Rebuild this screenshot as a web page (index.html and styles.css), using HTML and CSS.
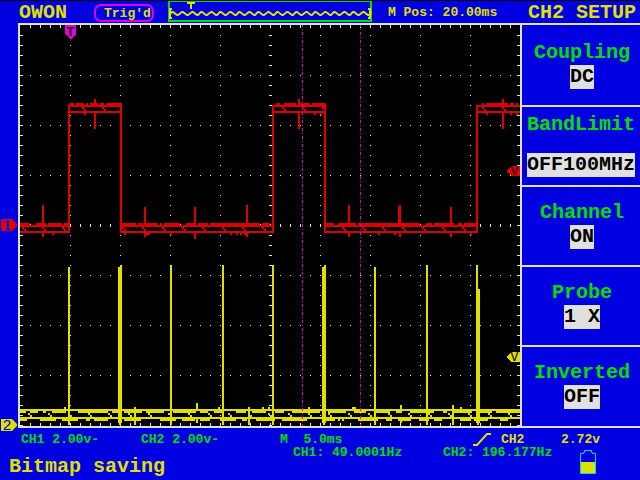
FILE: index.html
```
<!DOCTYPE html>
<html lang="en">
<head>
<meta charset="utf-8">
<title>OWON oscilloscope</title>
<link rel="stylesheet" href="styles.css">
</head>
<body>
<div class="scope">
  <header class="topbar">
    <span class="brand">OWON</span>
    <span class="trigger-state">Trig'd</span>
    <svg class="memory" viewBox="0 0 204 21" preserveAspectRatio="none" aria-hidden="true">
      <path class="green" d="M0 0H204V21H0ZM2 1V19H202V1Z" fill-rule="evenodd"/>
      <path class="yellow" d="M19 1h8v2h-3v5h-2V3h-3zM1 7h3v2H3v7h1v2H1zM200 7h3v11h-3v-2h1V9h-1z"/>
      <path class="memory-wave" d="M2 13l2-2h1l4 3h1l4-3h1l4 3h1l4-3h1l4 3h1l3-3h1l4 3h1l4-3h1l4 3h1l3-3h1l4 3h1l4-3h1l4 3h1l3-3h1l4 3h1l4-3h1l4 3h1l3-3h1l4 3h1l4-3h1l4 3h1l3-3h1l4 3h1l4-3h1l4 3h1l3-3h1l4 3h1l4-3h1l4 3h1l3-3h1l4 3h1l4-3h1l4 3h1l3-3h1l4 3h1l4-3h1l4 3h1l3-3h1l4 3h1l4-3h1l4 3h1l3-3h1l4 3h1l3-3h1l3 3h1l3-3h1l3 3"/>
    </svg>
    <span class="position">M Pos: 20.00ms</span>
    <h1 class="menu-title">CH2 SETUP</h1>
  </header>

  <div class="gutter">
    <svg class="marker marker-ch1" viewBox="0 0 16 12"><path class="red" d="M0 0H11L16 5V7L11 12H0Z"/><text class="marker-one" x="6" y="11">1</text></svg>
    <svg class="marker marker-ch2" viewBox="0 0 16 12"><path class="yellow" d="M0 0H11L16 5V7L11 12H0Z"/><text class="marker-two" x="6" y="11">2</text></svg>
  </div>

  <main class="plot">
    <svg class="graph" viewBox="20 25 500 401" preserveAspectRatio="none" role="img" aria-label="Channel 1 and channel 2 waveforms">
      <g class="grid">
        <path class="dots" d="M70.5 35V426M120.5 35V426M170.5 35V426M220.5 35V426M320.5 35V426M370.5 35V426M420.5 35V426M470.5 35V426M30 75.5H520M30 125.5H520M30 175.5H520M30 275.5H520M30 325.5H520M30 375.5H520"/>
        <path class="dots ticks" d="M30 26.5H520M30 225.5H520M30 424.5H520M21.5 35V426M270.5 35V426M518.5 35V426"/>
      </g>

      <g class="yellow">
        <path d="M20 409H520V411H20ZM20 417H520V419H20Z"/>
        <path d="M20 411h6v2h-6zM30 411h8v2h-8zM43 411h3v2h-3zM52 411h14v2h-14zM78 411h30v2h-30zM112 411h6v2h-6zM124 411h18v2h-18zM146 411h18v2h-18zM173 411h23v2h-23zM200 411h8v2h-8zM214 411h10v2h-10zM236 411h10v2h-10zM252 411h14v2h-14zM275 411h9v2h-9zM292 411h28v2h-28zM328 411h18v2h-18zM354 411h12v2h-12zM374 411h16v2h-16zM396 411h6v2h-6zM410 411h24v2h-24zM443 411h4v2h-4zM452 411h20v2h-20zM480 411h12v2h-12zM496 411h24v2h-24z"/>
        <path d="M20 419h7v2h-7zM40 419h16v2h-16zM62 419h16v2h-16zM86 419h4v2h-4zM94 419h14v2h-14zM124 419h17v2h-17zM160 419h16v2h-16zM182 419h13v2h-13zM200 419h10v2h-10zM220 419h16v2h-16zM242 419h5v2h-5zM256 419h19v2h-19zM282 419h25v2h-25zM326 419h9v2h-9zM338 419h2v2h-2zM342 419h2v2h-2zM358 419h20v2h-20zM386 419h6v2h-6zM398 419h13v2h-13zM419 419h10v2h-10zM434 419h8v2h-8zM460 419h11v2h-11zM474 419h14v2h-14zM500 419h8v2h-8z"/>
        <path d="M68 267h2v158h-2zM118 267h2v-2h2v158h-1v2h-2v-2h-1zM170 265h2v160h-2zM222 265h2v160h-2zM272 265h2v160h-2zM322 267h2v-2h2v158h-1v2h-2v-2h-1zM374 267h2v158h-2zM426 265h2v160h-2zM476 265h2v24h2v134h-1v2h-2v-2h-1z"/>
        <path d="M134 407h2v18h-2zM196 403h2v6h-2zM196 419h2v4h-2zM248 407h2v18h-2zM64 407h2v2h-2zM218 407h2v2h-2zM262 407h2v2h-2zM268 407h2v2h-2zM308 407h2v2h-2zM352 407h4v2h-4zM400 405h2v4h-2zM400 419h2v4h-2zM452 405h2v20h-2zM460 407h2v2h-2z"/>
      </g>
      <path class="steps steps-ch2" d="M28 414H520M30 416H520"/>

      <g class="red">
        <path d="M20 225H68V105H122V225H272V105H326V225H476V105H520V107H478V233H324V107H274V233H120V107H70V233H20V231H68V227H20ZM122 227V231H272V227ZM326 227V231H476V227ZM70 111H120V113H70ZM274 111H324V113H274ZM478 111H520V113H478Z" fill-rule="evenodd"/>
        <path d="M20 223h10v2h-10zM36 223h10v2h-10zM48 223h14v2h-14zM64 223h5v2h-5zM121 223h15v2h-15zM138 223h5v2h-5zM144 223h14v2h-14zM160 223h2v2h-2zM164 223h16v2h-16zM186 223h10v2h-10zM198 223h10v2h-10zM210 223h50v2h-50zM262 223h8v2h-8zM324 223h10v2h-10zM338 223h18v2h-18zM358 223h62v2h-62zM426 223h6v2h-6zM434 223h20v2h-20zM458 223h4v2h-4zM464 223h12v2h-12z"/>
        <path d="M69 103h5v2h-5zM76 103h8v2h-8zM86 103h2v2h-2zM90 103h8v2h-8zM100 103h4v2h-4zM106 103h16v2h-16zM276 103h4v2h-4zM284 103h12v2h-12zM298 103h12v2h-12zM312 103h14v2h-14zM482 103h2v2h-2zM486 103h22v2h-22zM510 103h4v2h-4zM516 103h2v2h-2z"/>
        <path d="M94 99h2v5h-2zM94 112h2v17h-2zM298 99h2v5h-2zM298 112h2v17h-2zM502 99h2v5h-2zM502 112h2v17h-2zM42 205h2v19h-2zM42 232h2v5h-2zM144 207h2v17h-2zM144 232h2v5h-2zM194 207h2v17h-2zM194 232h2v7h-2zM246 205h2v19h-2zM246 232h2v5h-2zM348 205h2v19h-2zM348 232h2v5h-2zM398 207h1v-2h2v19h-3zM399 232h2v5h-2zM450 207h2v17h-2zM450 232h2v5h-2z"/>
        <path d="M84 113h2v2h-2zM314 113h2v2h-2zM320 113h2v2h-2zM486 113h2v2h-2zM510 113h2v2h-2zM516 113h2v2h-2zM52 233h2v2h-2zM124 233h2v2h-2zM146 233h4v2h-4zM170 233h2v2h-2zM230 233h2v2h-2zM236 233h2v2h-2zM240 233h2v2h-2zM244 233h2v2h-2zM378 233h2v2h-2zM394 233h2v2h-2zM470 233h2v2h-2z"/>
      </g>
      <path class="steps steps-ch1" d="M22 228H68M24 230H68M122 228H272M124 230H272M342 228H476M344 230H476M82 108H120M84 110H120M282 108H324M284 110H324M482 108H520M484 110H520"/>

      <path class="cursors" d="M302.5 24V426M360.5 24V426"/>
      <path class="magenta" d="M65 25H76V34L71 39H70L65 34Z"/>
      <text class="marker-t" x="70.5" y="36">T</text>
      <path class="red" d="M520 166H511L507 170V172L511 176H520Z"/>
      <path class="yellow" d="M520 352H511L507 356V358L511 362H520Z"/>
      <text class="marker-v" x="514.5" y="175">V</text>
      <text class="marker-v" x="514.5" y="361">V</text>
    </svg>
  </main>

  <nav class="menu" aria-label="CH2 setup">
    <button class="item item-first" type="button"><span class="label">Coupling</span><span class="value">DC</span></button>
    <button class="item item-spread" type="button"><span class="label">BandLimit</span><span class="value">OFF100MHz</span></button>
    <button class="item" type="button"><span class="label">Channel</span><span class="value">ON</span></button>
    <button class="item" type="button"><span class="label">Probe</span><span class="value">1 X</span></button>
    <button class="item" type="button"><span class="label">Inverted</span><span class="value">OFF</span></button>
  </nav>

  <footer class="status">
    <div class="scales">
      <span>CH1 2.00v-</span>
      <span>CH2 2.00v-</span>
      <span>M&nbsp; 5.0ms</span>
      <svg class="slope" viewBox="0 0 18 13" aria-label="Rising edge"><path d="M0 12H4L14 1H18"/></svg>
      <span class="source">CH2</span>
      <span class="source">2.72v</span>
    </div>
    <div class="readings">
      <span class="message">Bitmap saving</span>
      <span>CH1: 49.0001Hz</span>
      <span>CH2: 196.177Hz</span>
      <svg class="battery" viewBox="0 0 16 24" aria-label="Battery half full"><path class="yellow" d="M1 12H15V23H1Z"/><path class="battery-case" d="M.5 23.5V3.5H3.5V2.5H4.5V.5H11.5V2.5H12.5V3.5H15.5V23.5Z"/></svg>
    </div>
  </footer>
</div>
</body>
</html>
```
FILE: styles.css
```
:root {
  --blue: #0000e0;
  --white: #e0e0e0;
  --yellow: #e0e000;
  --green: #00e000;
  --red: #e00000;
  --magenta: #e000e0;
  --cyan: #00e0e0;
}

* { box-sizing: border-box; }

body {
  margin: 0;
  background: #000;
  font: bold 13px/16px "Liberation Mono", monospace;
}

.scope {
  display: grid;
  grid-template: auto minmax(0, 1fr) auto / 18px minmax(0, 1fr) 118px;
  height: 100vh;
  min-height: 440px;
  border-top: 1px solid #000;
  background: var(--blue);
}

.yellow { fill: var(--yellow); }
.green { fill: var(--green); }
.red { fill: var(--red); }
.magenta { fill: var(--magenta); }

/* Top bar */
.topbar {
  grid-column: 1 / -1;
  display: flex;
  align-items: flex-start;
  height: 22px;
  padding: 0 4px 0 19px;
  color: var(--yellow);
  white-space: nowrap;
}

.brand,
.menu-title {
  margin: 0;
  font-size: 20px;
  line-height: 24px;
}

.brand { margin-right: 27px; }

.trigger-state {
  width: 60px;
  height: 18px;
  margin: 3px 14px 0 0;
  padding-left: 8px;
  border: 2px solid var(--magenta);
  border-radius: 7px;
  line-height: 15px;
}

.memory {
  flex: 1;
  min-width: 0;
  height: 21px;
  shape-rendering: crispEdges;
}

.memory-wave {
  fill: none;
  stroke: var(--yellow);
  stroke-width: 2;
  shape-rendering: auto;
}

.position {
  flex: 0 0 140px;
  margin: 4px 0 0 16px;
}

/* Channel markers */
.gutter { position: relative; }

.marker {
  position: absolute;
  left: 1px;
  width: 16px;
  height: 12px;
  z-index: 1;
  overflow: visible;
}

.marker-ch1 { top: 48.5%; }
.marker-ch2 { bottom: -3px; }

.marker text {
  fill: var(--blue);
  text-anchor: middle;
}

.marker-one { font: bold 15px "Liberation Serif", serif; }
.marker-two { font: 15px "Liberation Mono", monospace; }

/* Waveform area */
.plot {
  border: 2px solid var(--white);
  background: #000;
}

.graph {
  display: block;
  width: 100%;
  height: 100%;
  shape-rendering: crispEdges;
}

.dots {
  fill: none;
  stroke: var(--white);
  stroke-dasharray: 1 9;
}

.ticks { stroke-width: 3; }

.cursors {
  fill: none;
  stroke: var(--magenta);
  stroke-dasharray: 3 2 1 2;
}

.steps {
  fill: none;
  stroke-width: 2;
  stroke-dasharray: 2 18;
}

.steps-ch1 { stroke: var(--red); }
.steps-ch2 { stroke: var(--yellow); }

.marker-t,
.marker-v {
  font-size: 13px;
  text-anchor: middle;
}

.marker-v { font-weight: normal; }

/* Setup menu */
.menu {
  display: grid;
  grid-template-rows: 82fr 80fr 80fr 80fr 81fr;
  border-top: 2px solid var(--white);
}

.item {
  display: flex;
  flex-direction: column;
  align-items: center;
  min-height: 0;
  padding: 14px 0 0 2px;
  border: 0;
  border-bottom: 2px solid var(--white);
  background: none;
  color: var(--green);
  font: bold 20px/24px "Liberation Mono", monospace;
}

.item-first { padding-top: 16px; }

.item-spread {
  gap: 16px;
  padding: 6px 0 0;
}

.value {
  background: var(--white);
  color: #000;
}

/* Status area */
.status {
  grid-column: 1 / -1;
  height: 52px;
  padding-top: 5px;
  color: var(--green);
  line-height: 13px;
  white-space: nowrap;
}

.scales {
  display: grid;
  grid-template-columns: 120fr 139fr 193fr 28fr 60fr 79fr;
  padding-left: 21px;
}

.source { color: var(--yellow); }

.slope {
  width: 18px;
  height: 13px;
  fill: none;
  stroke: var(--yellow);
  stroke-width: 2;
}

.readings {
  display: grid;
  grid-template-columns: 284fr 150fr 137fr 60fr;
  padding-left: 9px;
}

.message {
  margin-top: 9px;
  color: var(--yellow);
  font-size: 20px;
  line-height: 24px;
}

.battery {
  width: 16px;
  height: 24px;
  margin-top: 4px;
}

.battery-case {
  fill: none;
  stroke: var(--cyan);
}
```
